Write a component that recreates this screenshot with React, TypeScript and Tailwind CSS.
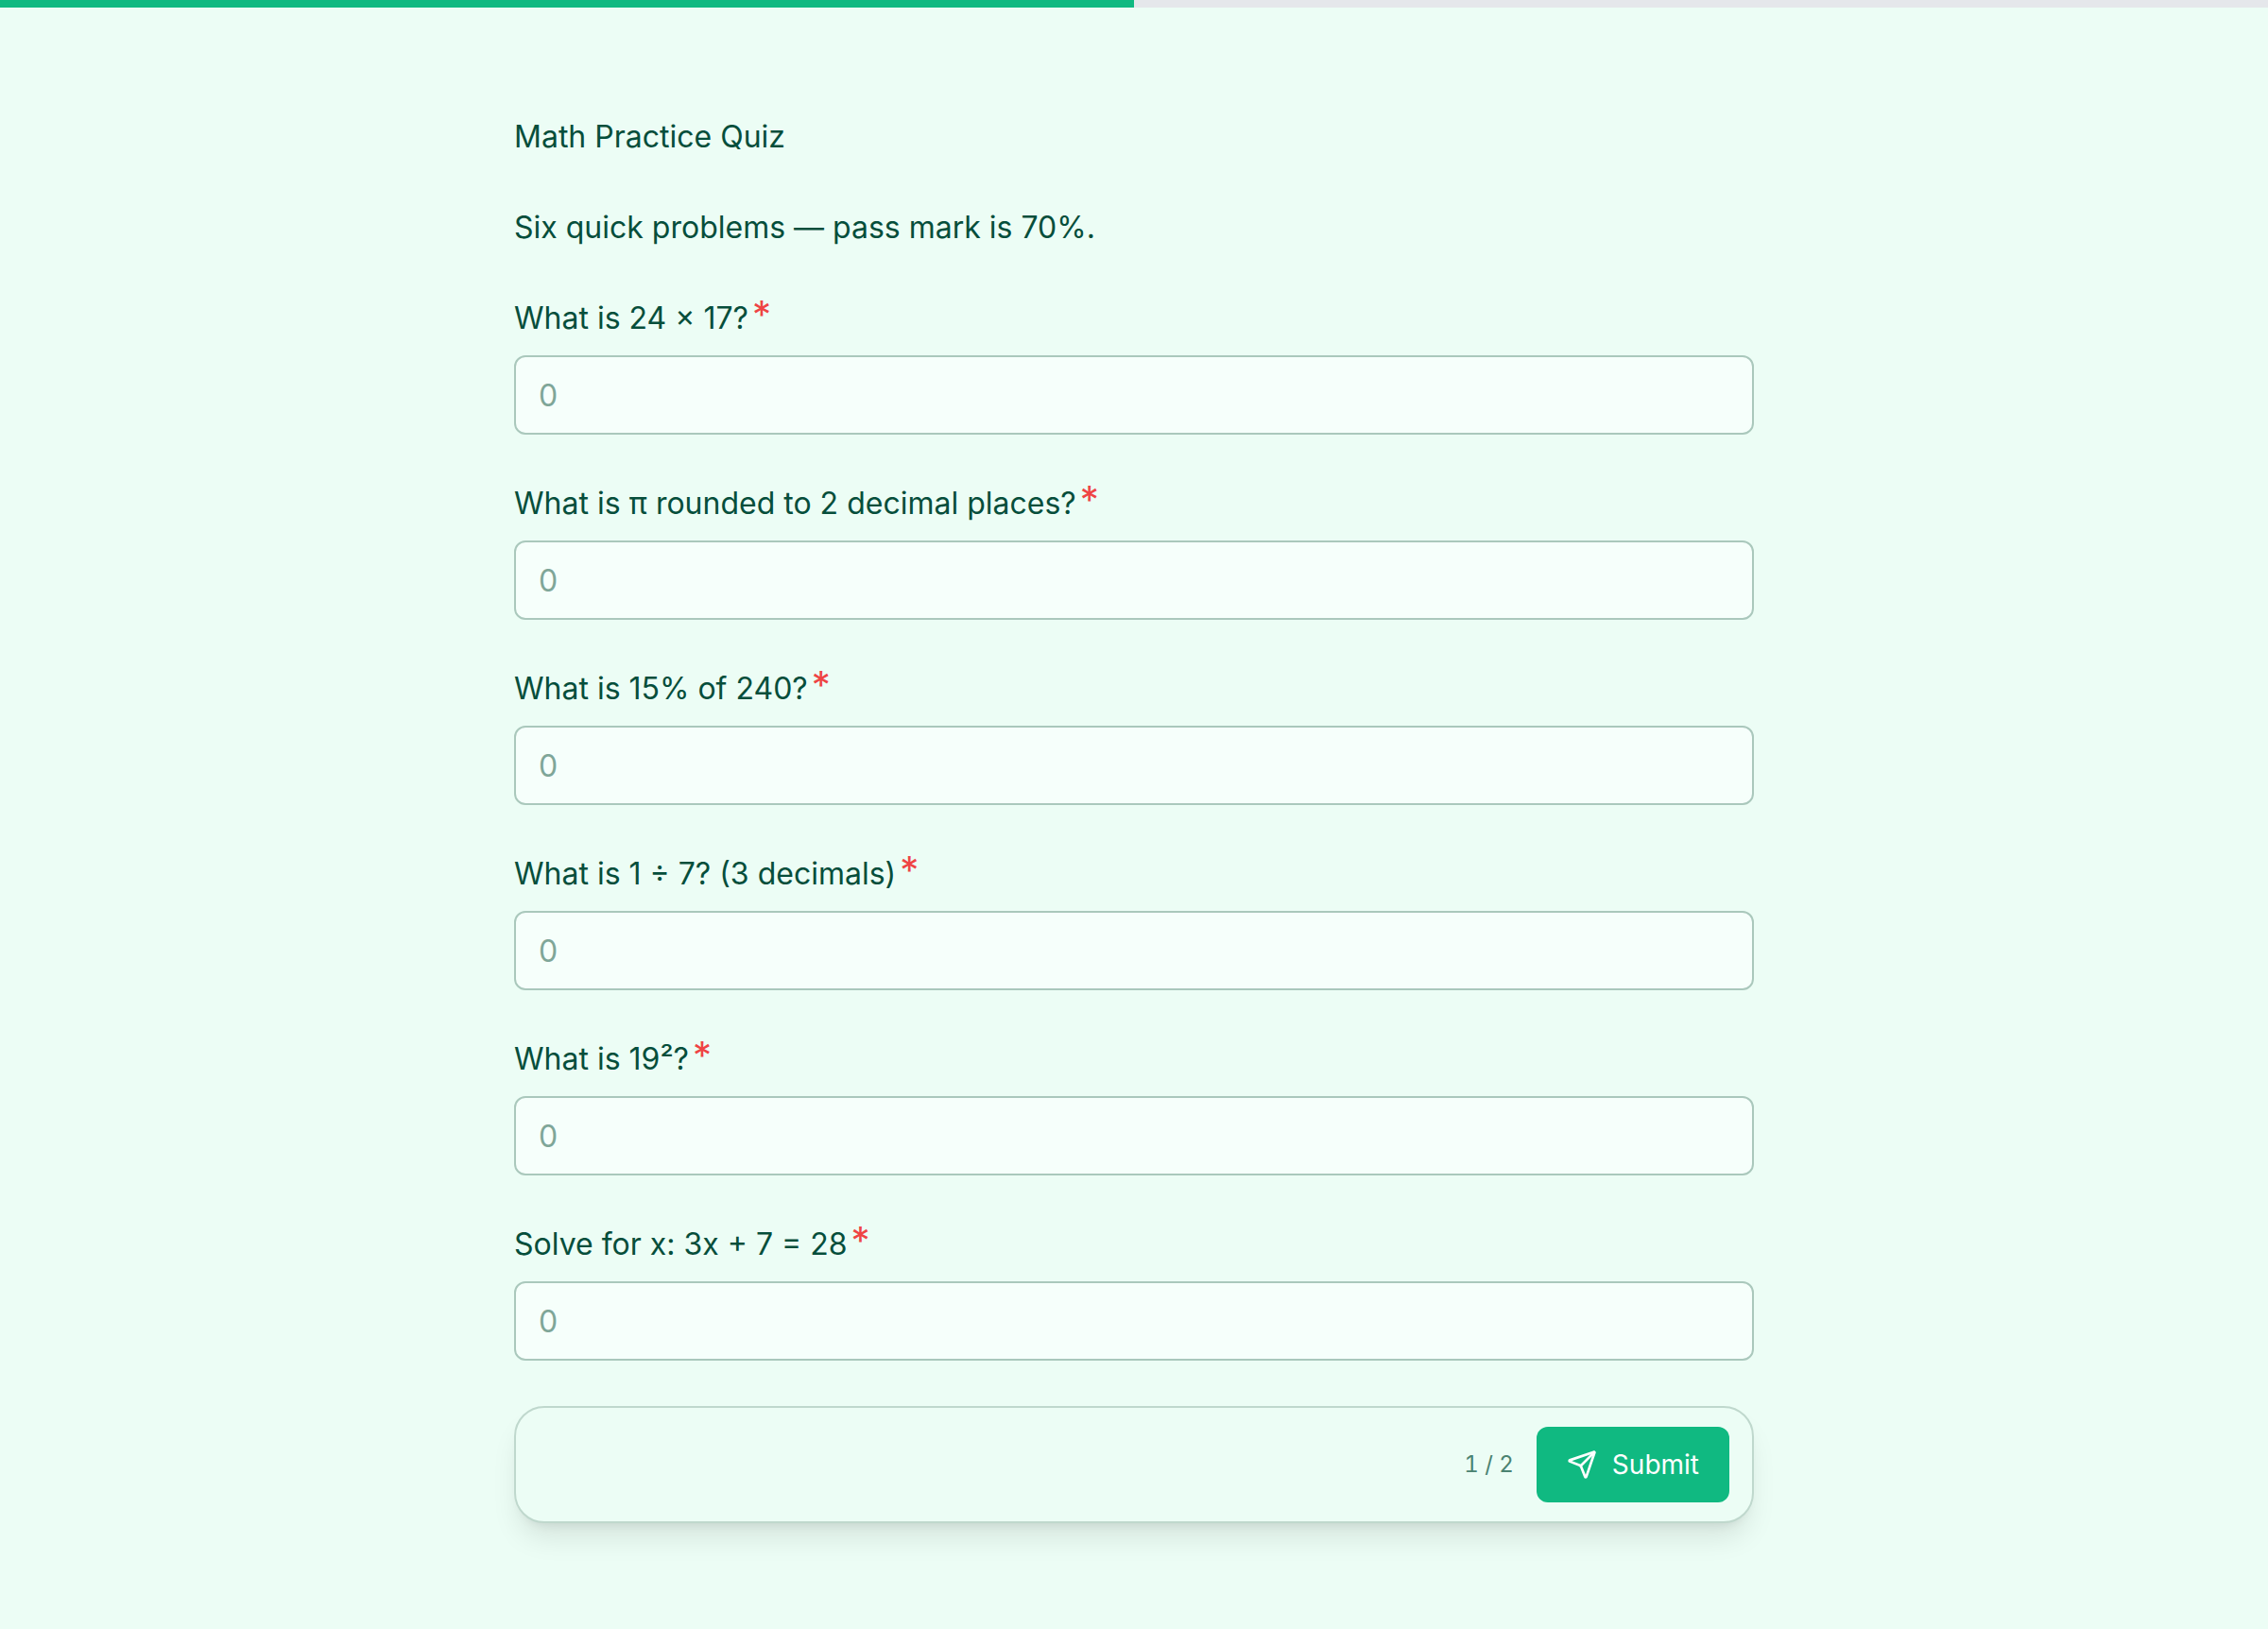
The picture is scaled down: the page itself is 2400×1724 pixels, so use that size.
import { useState } from 'react';
import { Send } from 'lucide-react';

const questions = [
    { id: 'q1', label: 'What is 24 × 17?' },
    { id: 'q2', label: 'What is π rounded to 2 decimal places?' },
    { id: 'q3', label: 'What is 15% of 240?' },
    { id: 'q4', label: 'What is 1 ÷ 7? (3 decimals)' },
    { id: 'q5', label: 'What is 19²?' },
    { id: 'q6', label: 'Solve for x: 3x + 7 = 28' },
];

const page = 1;
const totalPages = 2;

type FieldProps = {
    id: string;
    label: string;
    value: string;
    onChange: (value: string) => void;
};

function NumberField({ id, label, value, onChange }: FieldProps) {
    return (
        <div className="flex flex-col gap-4">
            <label htmlFor={id} className="flex h-12 gap-1">
                <span>{label}</span>
                <span className="text-[40px] leading-[42px] text-[#ef4444]">*</span>
            </label>
            <input
                id={id}
                type="text"
                inputMode="decimal"
                placeholder="0"
                value={value}
                onChange={(e) => onChange(e.target.value)}
                className="h-[84px] w-full rounded-xl border-2 border-[#aac8bc] bg-[#f6fffb] px-6 pt-px placeholder:text-[#7fa698] outline-none focus:border-[#10b981]"
            />
        </div>
    );
}

export default function App() {
    const [answers, setAnswers] = useState<Record<string, string>>({});

    return (
        <div className="min-h-screen bg-[#ecfdf5] font-['Inter',sans-serif] text-[32px] leading-[50px] text-[#064e3b]">
            {/* Progress */}
            <div className="h-2 w-full bg-[#e5e7eb]">
                <div className="h-full bg-[#10b981]" style={{ width: `${(page / totalPages) * 100}%` }} />
            </div>

            <form
                onSubmit={(e) => e.preventDefault()}
                className="mx-auto flex w-full max-w-[1312px] flex-col gap-12 py-28"
            >
                <h1 className="h-12">Math Practice Quiz</h1>
                <p className="h-12">Six quick problems — pass mark is 70%.</p>

                {questions.map((q) => (
                    <NumberField
                        key={q.id}
                        id={q.id}
                        label={q.label}
                        value={answers[q.id] ?? ''}
                        onChange={(value) => setAnswers((prev) => ({ ...prev, [q.id]: value }))}
                    />
                ))}

                {/* Footer bar */}
                <div className="flex items-center justify-end gap-6 rounded-[32px] border-2 border-[#bfd8cd] bg-[#ecfdf5] px-6 py-5 shadow-[0_20px_30px_-6px_rgba(0,0,0,0.1),0_8px_12px_-8px_rgba(0,0,0,0.1)]">
                    <span className="text-2xl tabular-nums text-[#4b8371]">{page} / {totalPages}</span>
                    <button
                        type="submit"
                        className="flex h-20 items-center gap-4 rounded-xl bg-[#10b981] px-8 text-[28px] text-white"
                    >
                        <Send size={32} />
                        Submit
                    </button>
                </div>
            </form>
        </div>
    );
}
